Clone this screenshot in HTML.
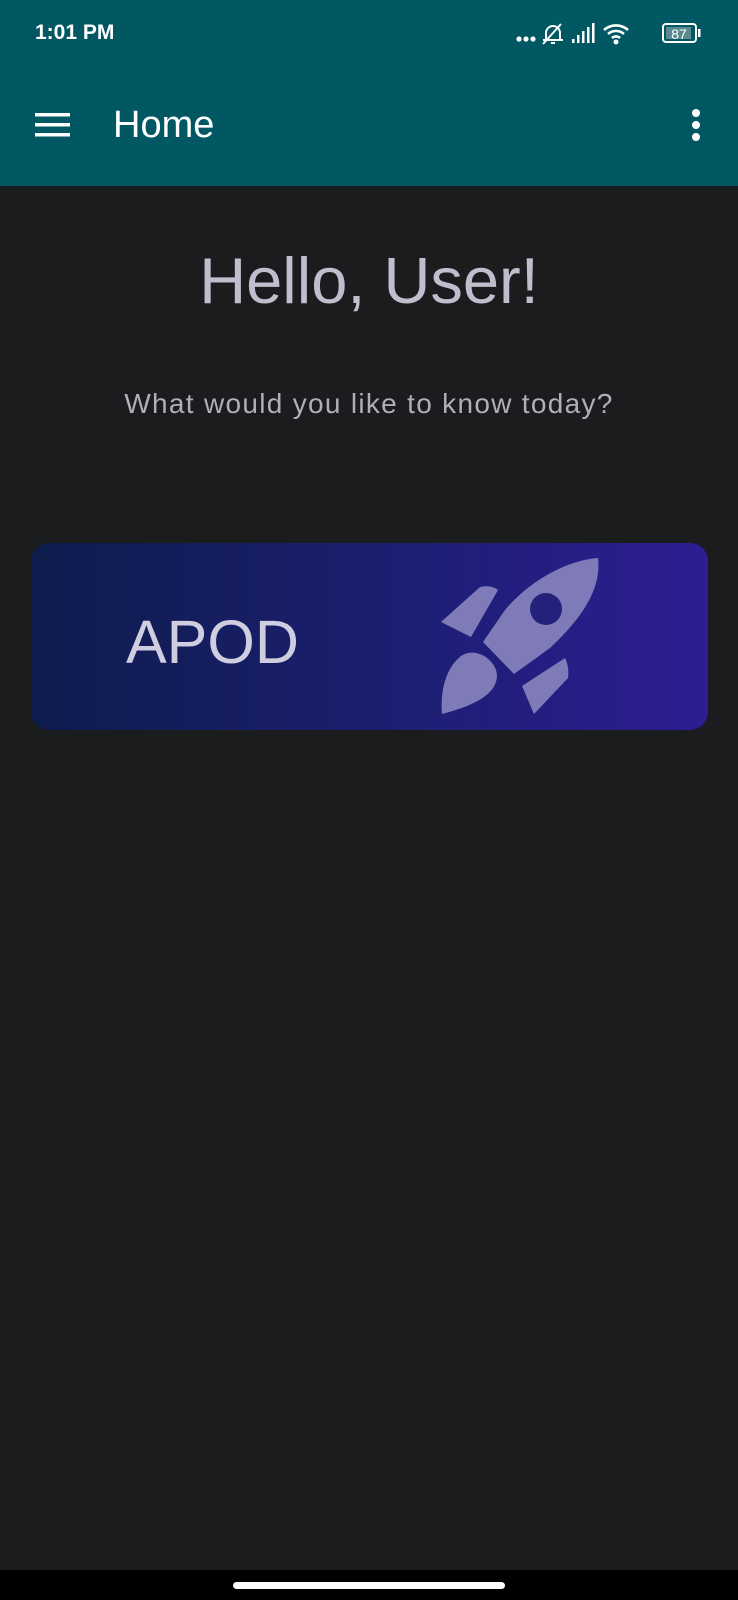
<!DOCTYPE html>
<html><head><meta charset="utf-8"><style>
*{margin:0;padding:0;box-sizing:border-box}
body{width:738px;height:1600px;background:#1a1c1e;font-family:"Liberation Sans",sans-serif;position:relative;overflow:hidden}
.top{position:absolute;left:0;top:0;width:738px;height:186px;background:#015762}
.abs{position:absolute}
</style></head><body>
<div class="top"></div>
<div class="abs" style="left:35px;top:21px;color:#fff;font-size:21px;font-weight:bold">1:01 PM</div>
<svg class="abs" style="left:515px;top:18px" width="225" height="30" viewBox="0 0 225 30">
 <g fill="#fff"><circle cx="4" cy="21" r="2.6"/><circle cx="11" cy="21" r="2.6"/><circle cx="18" cy="21" r="2.6"/></g>
 <path d="M28 22h20M31 22v-7a7 7 0 0 1 14 0v7M36 25h4M28 26L46 6" stroke="#fff" stroke-width="2" fill="none"/>
 <g fill="#fff"><rect x="57" y="21" width="2.5" height="4"/><rect x="62" y="17" width="2.5" height="8"/><rect x="67" y="13" width="2.5" height="12"/><rect x="72" y="9" width="2.5" height="16"/><rect x="77" y="5" width="2.5" height="20"/></g>
 <path d="M89 12a18 18 0 0 1 24 0M93 16a12 12 0 0 1 16 0M97 20a6 6 0 0 1 8 0" stroke="#fff" stroke-width="2.6" fill="none"/>
 <circle cx="101" cy="24" r="2.5" fill="#fff"/>
 <rect x="148" y="6" width="33" height="18" rx="3" fill="none" stroke="#fff" stroke-width="2"/>
 <rect x="151" y="9" width="25" height="12" fill="#5a8a90"/>
 <rect x="183" y="11" width="2.5" height="8" fill="#fff"/>
 <text x="164" y="21" font-size="14" fill="#fff" text-anchor="middle" font-family="Liberation Sans">87</text>
</svg>
<svg class="abs" style="left:35px;top:113px" width="36" height="26"><g fill="#fff"><rect y="0" width="35" height="3.5"/><rect y="10" width="35" height="3.5"/><rect y="20" width="35" height="3.5"/></g></svg>
<div class="abs" style="left:113px;top:104px;color:#fff;font-size:38px">Home</div>
<svg class="abs" style="left:688px;top:108px" width="20" height="36"><g fill="#fff"><circle cx="8" cy="5" r="4"/><circle cx="8" cy="17" r="4"/><circle cx="8" cy="29" r="4"/></g></svg>
<div class="abs" style="left:0;width:738px;top:243px;text-align:center;color:#c0bdcc;font-size:65px;letter-spacing:0px">Hello, User!</div>
<div class="abs" style="left:0;width:738px;top:388px;text-align:center;color:#b0aeb9;font-size:28px;letter-spacing:1.3px">What would you like to know today?</div>
<div class="abs" style="left:31px;top:543px;width:677px;height:187px;border-radius:18px;background:linear-gradient(90deg,#0e1c4d,#1c1f72 55%,#2e1d93)"></div>
<div class="abs" style="left:126px;top:607px;color:#d0cde0;font-size:61px">APOD</div>
<svg class="abs" style="left:0;top:0" width="738" height="740">
 <g fill="#7f7bb8">
  <path d="M598 558C568 560 530 580 505 610L483 642L514 674L550 648C580 620 602 590 598 558Z"/>
  <path d="M441 622L480 587C488 585 494 587 498 590L471 637Z"/>
  <path d="M522 686L565 658C568 664 569 671 568 678L534 714Z"/>
  <path d="M442 714C440 690 446 668 461 656C476 646 496 660 497 675C497 692 480 704 442 714Z"/>
 </g>
 <circle cx="546" cy="609" r="16" fill="#23217a"/>
</svg>
<div class="abs" style="left:0;top:1570px;width:738px;height:30px;background:#000"></div>
<div class="abs" style="left:233px;top:1582px;width:272px;height:7px;border-radius:4px;background:#fff"></div>
</body></html>
